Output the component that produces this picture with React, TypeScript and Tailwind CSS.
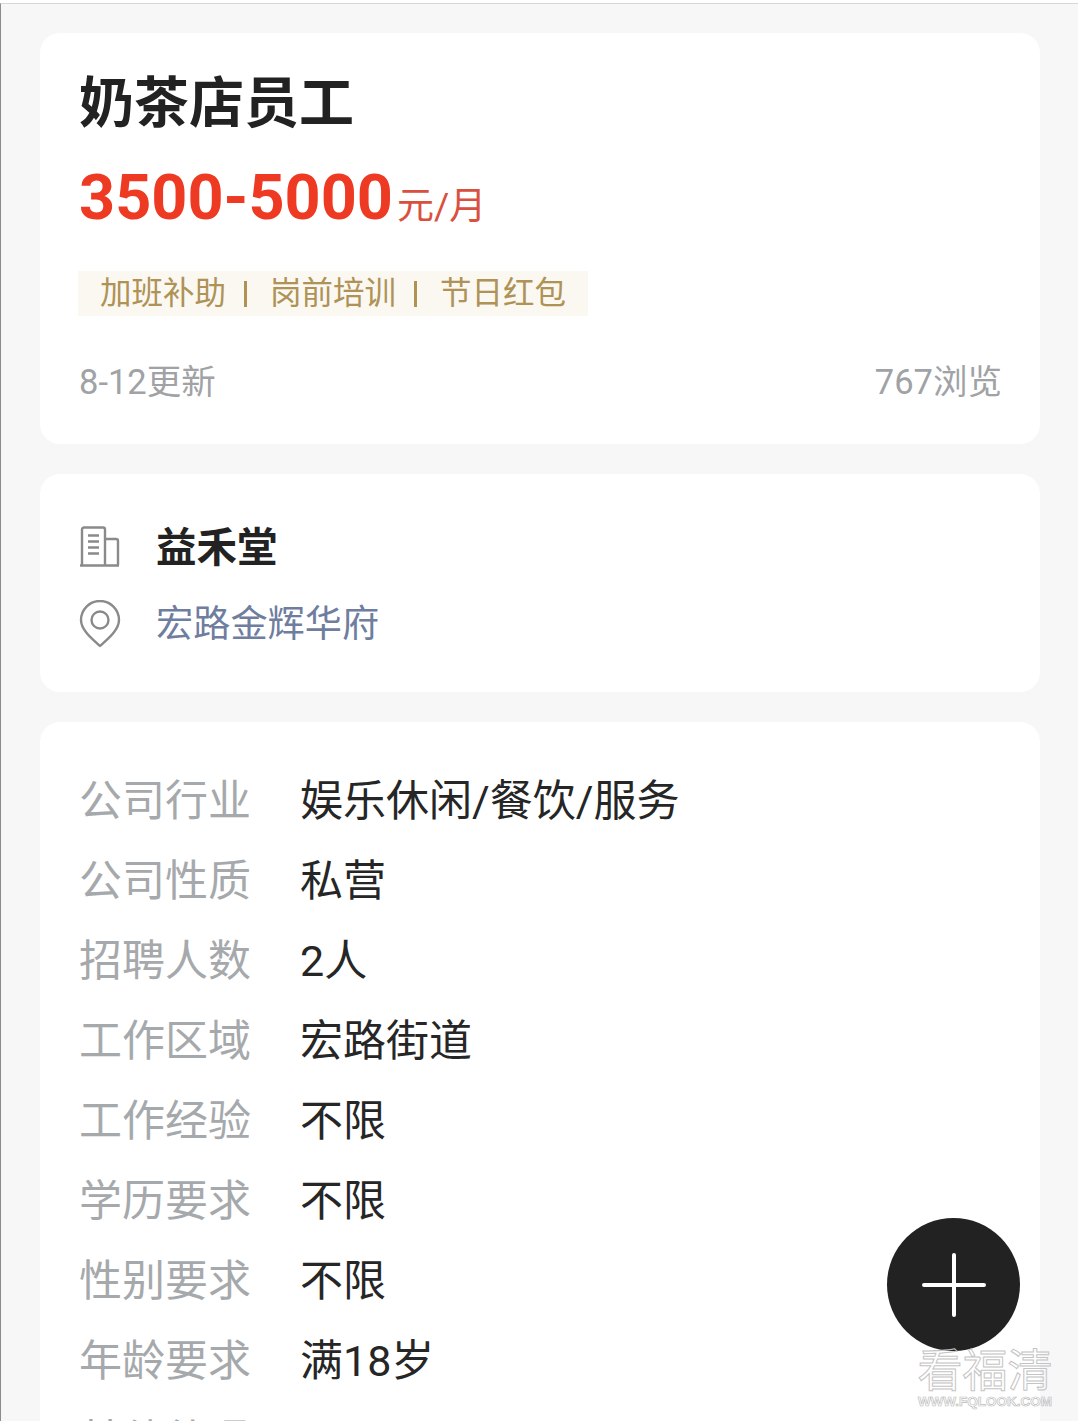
import React from "react";

const rows: [string, string][] = [
  ["公司行业", "娱乐休闲/餐饮/服务"],
  ["公司性质", "私营"],
  ["招聘人数", "2人"],
  ["工作区域", "宏路街道"],
  ["工作经验", "不限"],
  ["学历要求", "不限"],
  ["性别要求", "不限"],
  ["年龄要求", "满18岁"],
  ["其他待遇", ""],
];

function BuildingIcon() {
  return (
    <svg width="42" height="42" viewBox="0 0 42 42" fill="none" stroke="#8a8a8a" strokeWidth="2.4" className="-mt-1 shrink-0">
      <path d="M1 40.5h39" />
      <path d="M3 40V4.5a2 2 0 0 1 2-2h19a2 2 0 0 1 2 2V40" />
      <path d="M26 14h11a2 2 0 0 1 2 2v24" />
      <path d="M9 10.5h11M9 16.5h11M9 22.5h11M9 28.5h11" />
    </svg>
  );
}

function PinIcon() {
  return (
    <svg width="42" height="48" viewBox="0 0 42 48" fill="none" stroke="#8a8a8a" strokeWidth="2.4" className="shrink-0">
      <path d="M21 46 C16 41 2 31 2 20 A19 19 0 0 1 40 20 C40 31 26 41 21 46 Z" strokeLinejoin="round" />
      <circle cx="21" cy="20" r="8.5" />
    </svg>
  );
}

export default function App() {
  return (
    <div className="relative h-[1428px] w-[1078px] overflow-hidden bg-white font-['Roboto','Noto_Sans_CJK_SC',sans-serif]">
      <div className="mt-[3px] h-[1418px] overflow-hidden border-t border-l border-t-[#d8d8d8] border-l-[#8c8c8c] bg-[#f7f7f7] pt-[29px] pr-[38px] pl-[39px]">
        <section className="h-[411px] rounded-[20px] bg-white pt-[36px] pr-[38px] pl-[39px]">
          <h1 className="text-[55px] leading-[68px] font-bold text-[#222222]">奶茶店员工</h1>
          <div className="mt-[27px] flex h-[68px] items-baseline text-[#ee3a22]">
            <span className="text-[63px] leading-[68px] font-bold">3500-5000</span>
            <span className="ml-[4px] text-[37px] leading-[40px] text-[#d9503f]">元/月</span>
          </div>
          <div className="mt-[39px] -ml-px flex h-[45px] w-[510px] items-center bg-[#fbf8f1] pl-[22px] text-[31.5px] text-[#ae9256]">
            <span>加班补助</span>
            <span className="mr-[23px] ml-[18px] h-[26px] w-[3px] bg-[#ae9256]" />
            <span>岗前培训</span>
            <span className="mr-[23px] ml-[18px] h-[26px] w-[3px] bg-[#ae9256]" />
            <span>节日红包</span>
          </div>
          <div className="mt-[42px] flex items-center justify-between text-[34.5px] leading-[48px] text-[#a0a2a5]">
            <span>8-12更新</span>
            <span>767浏览</span>
          </div>
        </section>

        <section className="mt-[30px] h-[218px] rounded-[20px] bg-white pt-[53px] pr-[38px] pl-[39px]">
          <div className="flex h-[42px] items-center gap-[35px]">
            <BuildingIcon />
            <span className="text-[40.5px] leading-[42px] font-bold text-[#222222]">益禾堂</span>
          </div>
          <div className="mt-[31px] flex h-[48px] items-center gap-[35px]">
            <PinIcon />
            <span className="text-[37.2px] leading-[48px] text-[#6f7d9f]">宏路金辉华府</span>
          </div>
        </section>

        <section className="mt-[30px] rounded-[20px] bg-white pt-[39px] pr-[38px] pl-[39px]">
          {rows.map(([label, value]) => (
            <div key={label} className="flex h-20 items-center text-[43px] leading-[80px]">
              <span className="w-[221px] shrink-0 text-[#a6a9ac]">{label}</span>
              <span className="text-[#262626]">{value}</span>
            </div>
          ))}
        </section>
      </div>

      <button className="absolute top-[1218px] left-[887px] flex h-[133px] w-[133px] items-center justify-center rounded-full bg-[#222222]">
        <svg width="64" height="64" viewBox="0 0 64 64" stroke="#ffffff" strokeWidth="4" strokeLinecap="round">
          <path d="M32 2v60M2 32h60" />
        </svg>
      </button>

      <div className="absolute top-[1342px] left-[917px] flex w-[136px] flex-col items-center text-transparent">
        <span className="font-['Noto_Sans_CJK_SC',sans-serif] text-[45px] leading-[52px] [-webkit-text-stroke:1px_#c4c4c4]">看福清</span>
        <span className="font-['Liberation_Sans',sans-serif] text-[13.5px] leading-[16px] font-bold [-webkit-text-stroke:0.7px_#bdbdbd]">WWW.FQLOOK.COM</span>
      </div>
    </div>
  );
}
